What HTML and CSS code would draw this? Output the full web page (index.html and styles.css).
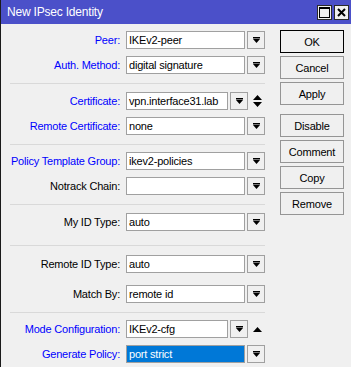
FILE: index.html
```html
<!DOCTYPE html>
<html lang="en">
<head>
    <meta charset="UTF-8">
    <title>New IPsec Identity</title>
    <link rel="stylesheet" href="styles.css">
</head>
<body>
    <div class="window">
        <div class="titlebar">
            <span class="title">New IPsec Identity</span>
            <div class="title-btns">
                <span class="tbtn">
                    <svg width="11" height="11" viewBox="0 0 11 11"><rect x="0.5" y="0.5" width="10" height="10" fill="none" stroke="#000"/><rect x="0" y="0" width="11" height="2" fill="#000"/></svg>
                </span>
                <span class="tbtn">
                    <svg width="9" height="9" viewBox="0 0 9 9"><path d="M1 1 L8 8 M8 1 L1 8" stroke="#000" stroke-width="2"/></svg>
                </span>
            </div>
        </div>

        <div class="content">
            <div class="form">
                <div class="group g-first">
                    <div class="row">
                        <span class="lbl link">Peer:</span>
                        <div class="field">IKEv2-peer</div>
                        <span class="drop"><svg width="7" height="6" viewBox="0 0 7 6"><rect width="7" height="1.5"/><path d="M0 2 H7 L3.5 6 Z"/></svg></span>
                    </div>
                    <div class="row">
                        <span class="lbl link">Auth. Method:</span>
                        <div class="field">digital signature</div>
                        <span class="drop"><svg width="7" height="6" viewBox="0 0 7 6"><rect width="7" height="1.5"/><path d="M0 2 H7 L3.5 6 Z"/></svg></span>
                    </div>
                </div>
                <div class="sep"></div>

                <div class="group">
                    <div class="row">
                        <span class="lbl link">Certificate:</span>
                        <div class="field short">vpn.interface31.lab</div>
                        <span class="drop"><svg width="7" height="6" viewBox="0 0 7 6"><rect width="7" height="1.5"/><path d="M0 2 H7 L3.5 6 Z"/></svg></span>
                        <span class="arrows"><svg width="9" height="12" viewBox="0 0 9 12"><path d="M4.5 0 L9 5 H0 Z M0 7 H9 L4.5 12 Z"/></svg></span>
                    </div>
                    <div class="row">
                        <span class="lbl link">Remote Certificate:</span>
                        <div class="field">none</div>
                        <span class="drop"><svg width="7" height="6" viewBox="0 0 7 6"><rect width="7" height="1.5"/><path d="M0 2 H7 L3.5 6 Z"/></svg></span>
                    </div>
                </div>
                <div class="sep"></div>

                <div class="group g-third">
                    <div class="row">
                        <span class="lbl link">Policy Template Group:</span>
                        <div class="field">ikev2-policies</div>
                        <span class="drop"><svg width="7" height="6" viewBox="0 0 7 6"><rect width="7" height="1.5"/><path d="M0 2 H7 L3.5 6 Z"/></svg></span>
                    </div>
                    <div class="row">
                        <span class="lbl">Notrack Chain:</span>
                        <div class="field"></div>
                        <span class="drop"><svg width="7" height="6" viewBox="0 0 7 6"><rect width="7" height="1.5"/><path d="M0 2 H7 L3.5 6 Z"/></svg></span>
                    </div>
                </div>
                <div class="sep"></div>

                <div class="group g-myid">
                    <div class="row">
                        <span class="lbl">My ID Type:</span>
                        <div class="field">auto</div>
                        <span class="drop"><svg width="7" height="6" viewBox="0 0 7 6"><rect width="7" height="1.5"/><path d="M0 2 H7 L3.5 6 Z"/></svg></span>
                    </div>
                </div>
                <div class="sep"></div>

                <div class="group g-remote">
                    <div class="row">
                        <span class="lbl">Remote ID Type:</span>
                        <div class="field">auto</div>
                        <span class="drop"><svg width="7" height="6" viewBox="0 0 7 6"><rect width="7" height="1.5"/><path d="M0 2 H7 L3.5 6 Z"/></svg></span>
                    </div>
                    <div class="row">
                        <span class="lbl">Match By:</span>
                        <div class="field">remote id</div>
                        <span class="drop"><svg width="7" height="6" viewBox="0 0 7 6"><rect width="7" height="1.5"/><path d="M0 2 H7 L3.5 6 Z"/></svg></span>
                    </div>
                </div>
                <div class="sep"></div>

                <div class="group g-last">
                    <div class="row">
                        <span class="lbl link">Mode Configuration:</span>
                        <div class="field short">IKEv2-cfg</div>
                        <span class="drop"><svg width="7" height="6" viewBox="0 0 7 6"><rect width="7" height="1.5"/><path d="M0 2 H7 L3.5 6 Z"/></svg></span>
                        <span class="arrows"><svg width="9" height="5" viewBox="0 0 9 5"><path d="M4.5 0 L9 5 H0 Z"/></svg></span>
                    </div>
                    <div class="row">
                        <span class="lbl link">Generate Policy:</span>
                        <div class="field selected">port strict</div>
                        <span class="drop"><svg width="7" height="6" viewBox="0 0 7 6"><rect width="7" height="1.5"/><path d="M0 2 H7 L3.5 6 Z"/></svg></span>
                    </div>
                </div>
            </div>

            <div class="buttons">
                <button class="btn default">OK</button>
                <button class="btn">Cancel</button>
                <button class="btn">Apply</button>
                <button class="btn spaced">Disable</button>
                <button class="btn">Comment</button>
                <button class="btn">Copy</button>
                <button class="btn">Remove</button>
            </div>
        </div>
    </div>
</body>
</html>
```

FILE: styles.css
```css
* {
    margin: 0;
    padding: 0;
    box-sizing: border-box;
}

body {
    font-family: "Liberation Sans", Arial, sans-serif;
    font-size: 11px;
    letter-spacing: -0.2px;
    background: #f0f0f0;
}

.window {
    width: 351px;
    height: 367px;
    background: #f0f0f0;
    border-left: 1px solid #1a1a1a;
    overflow: hidden;
}

/* Title bar */
.titlebar {
    height: 24px;
    background: #4b50c9;
    display: flex;
    align-items: center;
    justify-content: space-between;
    padding: 0 2px 0 6px;
}

.title {
    color: #ffffff;
    font-size: 12px;
}

.title-btns {
    display: flex;
    gap: 2px;
}

.tbtn {
    width: 15px;
    height: 15px;
    background: #f0f0f0;
    border: 1px solid #2a2a2a;
    display: flex;
    align-items: center;
    justify-content: center;
}

/* Content */
.content {
    display: flex;
}

.form {
    width: 279px;
}

.group {
    display: flex;
    flex-direction: column;
    gap: 7px;
    padding: 8px 0 9px;
}

.g-first {
    padding-top: 7px;
}

.g-third {
    padding-top: 7px;
}

.g-myid {
    padding-bottom: 14px;
}

.g-remote {
    padding-top: 9px;
    gap: 12px;
}

.g-last {
    padding-top: 7px;
}

.sep {
    height: 1px;
    margin-left: 9px;
    width: 255px;
    background: #d9d9d9;
}

.row {
    display: flex;
    align-items: center;
    height: 18px;
}

.lbl {
    width: 119px;
    text-align: right;
    margin-right: 6px;
    color: #000;
    white-space: nowrap;
}

.lbl.link {
    color: #0000ff;
}

.field {
    width: 119px;
    height: 18px;
    background: #fff;
    border: 1px solid #a0a0a0;
    padding: 0 2px;
    line-height: 16px;
    white-space: nowrap;
    overflow: hidden;
}

.field.short {
    width: 102px;
}

.field.selected {
    background: #0078d7;
    color: #fff;
}

.drop {
    width: 18px;
    height: 18px;
    margin-left: 2px;
    border: 1px solid #a0a0a0;
    background: #f0f0f0;
    display: flex;
    align-items: center;
    justify-content: center;
}

.arrows {
    display: flex;
    align-items: center;
    margin-left: 5px;
}

/* Buttons */
.buttons {
    display: flex;
    flex-direction: column;
    gap: 3px;
    padding-top: 6px;
}

.btn {
    width: 64px;
    height: 23px;
    font-family: inherit;
    font-size: 11px;
    letter-spacing: -0.2px;
    color: #000;
    background: #f0f0f0;
    border: 1px solid #959595;
}

.btn.default {
    border-color: #000;
}

.btn.spaced {
    margin-top: 6px;
}
```
